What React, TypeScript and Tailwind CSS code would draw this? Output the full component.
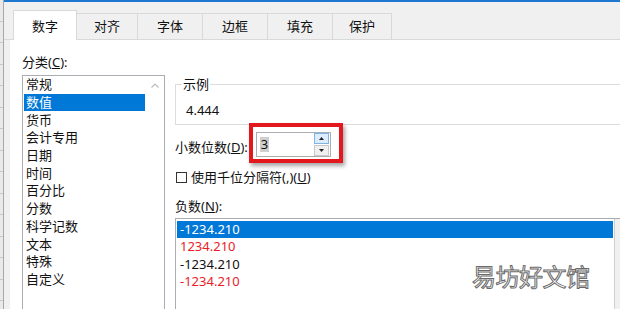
import React from "react";

const categories = [
  "常规",
  "数值",
  "货币",
  "会计专用",
  "日期",
  "时间",
  "百分比",
  "分数",
  "科学记数",
  "文本",
  "特殊",
  "自定义",
];

const tabs = [
  { label: "数字", w: "w-[64px]" },
  { label: "对齐", w: "w-[61px]" },
  { label: "字体", w: "w-[65px]" },
  { label: "边框", w: "w-[65px]" },
  { label: "填充", w: "w-[65px]" },
  { label: "保护", w: "w-[59px]" },
];

const negatives = [
  { text: "-1234.210", red: false },
  { text: "1234.210", red: true },
  { text: "-1234.210", red: false },
  { text: "-1234.210", red: true },
];

const App = () => {
  return (
    <div className="relative flex h-[309px] w-[620px] overflow-hidden bg-white font-['Noto_Sans','Noto_Sans_CJK_SC',sans-serif] text-[13px] leading-[17px] text-[#111]">
      {/* sheet behind the dialog */}
      <div className="flex w-[3px] shrink-0 flex-col overflow-hidden bg-[#e9e9e9]">
        {Array.from({ length: 15 }).map((_, i) => (
          <div key={i} className="h-[21.5px] shrink-0 border-b border-[#c8c8c8]" />
        ))}
      </div>
      <div className="w-[1px] shrink-0 bg-[#a8a8a8]" />

      {/* dialog */}
      <div className="flex min-w-0 flex-1 flex-col">
        <div className="h-[2px] shrink-0 bg-[#1e78d2]" />
        <div className="flex h-[38px] shrink-0 items-end border-b border-[#d9d9d9] bg-[#f0f0f0] pl-[9px]">
          {tabs.map((t, i) =>
            i === 0 ? (
              <div
                key={t.label}
                className={`${t.w} -mb-[1px] flex h-[30px] items-center justify-center border-x border-t border-[#d9d9d9] bg-white pt-[2px]`}
              >
                {t.label}
              </div>
            ) : (
              <div
                key={t.label}
                className={`${t.w} flex h-[26px] items-center justify-center border-r border-t border-[#d9d9d9] bg-[#f0f0f0]`}
              >
                {t.label}
              </div>
            )
          )}
        </div>

        <div className="flex min-h-0 flex-1 items-start border-l-[6px] border-[#f0f0f0] bg-white">
          {/* category list */}
          <div className="flex shrink-0 flex-col pl-[12px] pt-[14px]">
            <div>
              分类(<span className="underline">C</span>):
            </div>
            <div className="mt-[4px] flex h-[250px] w-[143px] border border-[#abadb3]">
              <div className="flex w-[122px] flex-col pl-[1px]">
                {categories.map((c, i) => (
                  <div
                    key={c}
                    className={`flex h-[17.7px] shrink-0 items-center pl-[2px] ${
                      i === 1 ? "bg-[#0078d7] text-white" : ""
                    }`}
                  >
                    {c}
                  </div>
                ))}
              </div>
              <div className="flex w-[19px] justify-center pt-[7px]">
                <svg width="8" height="5" viewBox="0 0 8 5">
                  <path d="M0.5 4.5 L4 1 L7.5 4.5" fill="none" stroke="#bcbcbc" strokeWidth="1.2" />
                </svg>
              </div>
            </div>
          </div>

          {/* right panel */}
          <div className="ml-[10px] flex min-w-0 flex-1 flex-col pt-[35.5px]">
            <fieldset className="border-y border-l border-[#dcdcdc] px-[10px] pb-[5px]">
              <legend className="-ml-[4px] px-[1px]">示例</legend>
              <div className="pt-[9px]">4.444</div>
            </fieldset>

            <div className="-mt-[1.5px] flex items-start">
              <div className="mt-[15.5px]">
                小数位数(<span className="underline">D</span>):
              </div>
              <div className="ml-[1px] h-[40px] border-[4px] border-[#e3171e] pl-[3px] pr-[8px] pt-[4.5px] shadow-[2px_3px_4px_rgba(0,0,0,0.35)]">
                <div className="flex h-[25.5px] w-[75px] items-center border border-[#abadb3] bg-white pl-[3px] pr-[1px]">
                  <span className="bg-[#cfcfcf] px-[1px] leading-[15px]">3</span>
                  <div className="ml-auto flex flex-col gap-[1px]">
                    <div className="flex h-[11px] w-[15px] items-center justify-center border border-[#7eb4ea] bg-[#dcecfc]">
                      <svg width="5" height="3" viewBox="0 0 5 3">
                        <path d="M0 3 L2.5 0 L5 3 Z" fill="#222" />
                      </svg>
                    </div>
                    <div className="flex h-[11px] w-[15px] items-center justify-center border border-[#c8c8c8] bg-[#f0f0f0]">
                      <svg width="5" height="3" viewBox="0 0 5 3">
                        <path d="M0 0 L5 0 L2.5 3 Z" fill="#222" />
                      </svg>
                    </div>
                  </div>
                </div>
              </div>
            </div>

            <div className="mt-[5.5px] flex items-center">
              <div className="ml-[1px] h-[11px] w-[11px] border border-[#333]" />
              <div className="ml-[4px]">
                使用千位分隔符(,)(<span className="underline">U</span>)
              </div>
            </div>

            <div className="mt-[12px]">
              负数(<span className="underline">N</span>):
            </div>
            <div className="mt-[3.5px] flex h-[100px] border-l border-t border-[#abadb3]">
              <div className="flex w-[439px] shrink-0 flex-col border-r border-[#d0d0d0] px-[1px] pt-[1.5px]">
                {negatives.map((n, i) => (
                  <div
                    key={i}
                    className={`flex h-[17.5px] shrink-0 items-center pl-[3px] ${
                      i === 0 ? "bg-[#0078d7] text-white" : n.red ? "text-[#ea1c26]" : "text-[#111]"
                    }`}
                  >
                    {n.text}
                  </div>
                ))}
              </div>
              <div className="flex-1 bg-[#f0f0f0]" />
            </div>
          </div>
        </div>
      </div>

      {/* watermark */}
      <div className="absolute left-[472px] top-[262px] font-['Noto_Sans_CJK_SC',sans-serif] text-[24px] leading-[28px] tracking-[-0.5px] text-white [-webkit-text-stroke:1px_#6a6a6a]">
        易坊好文馆
      </div>
    </div>
  );
};

export default App;
